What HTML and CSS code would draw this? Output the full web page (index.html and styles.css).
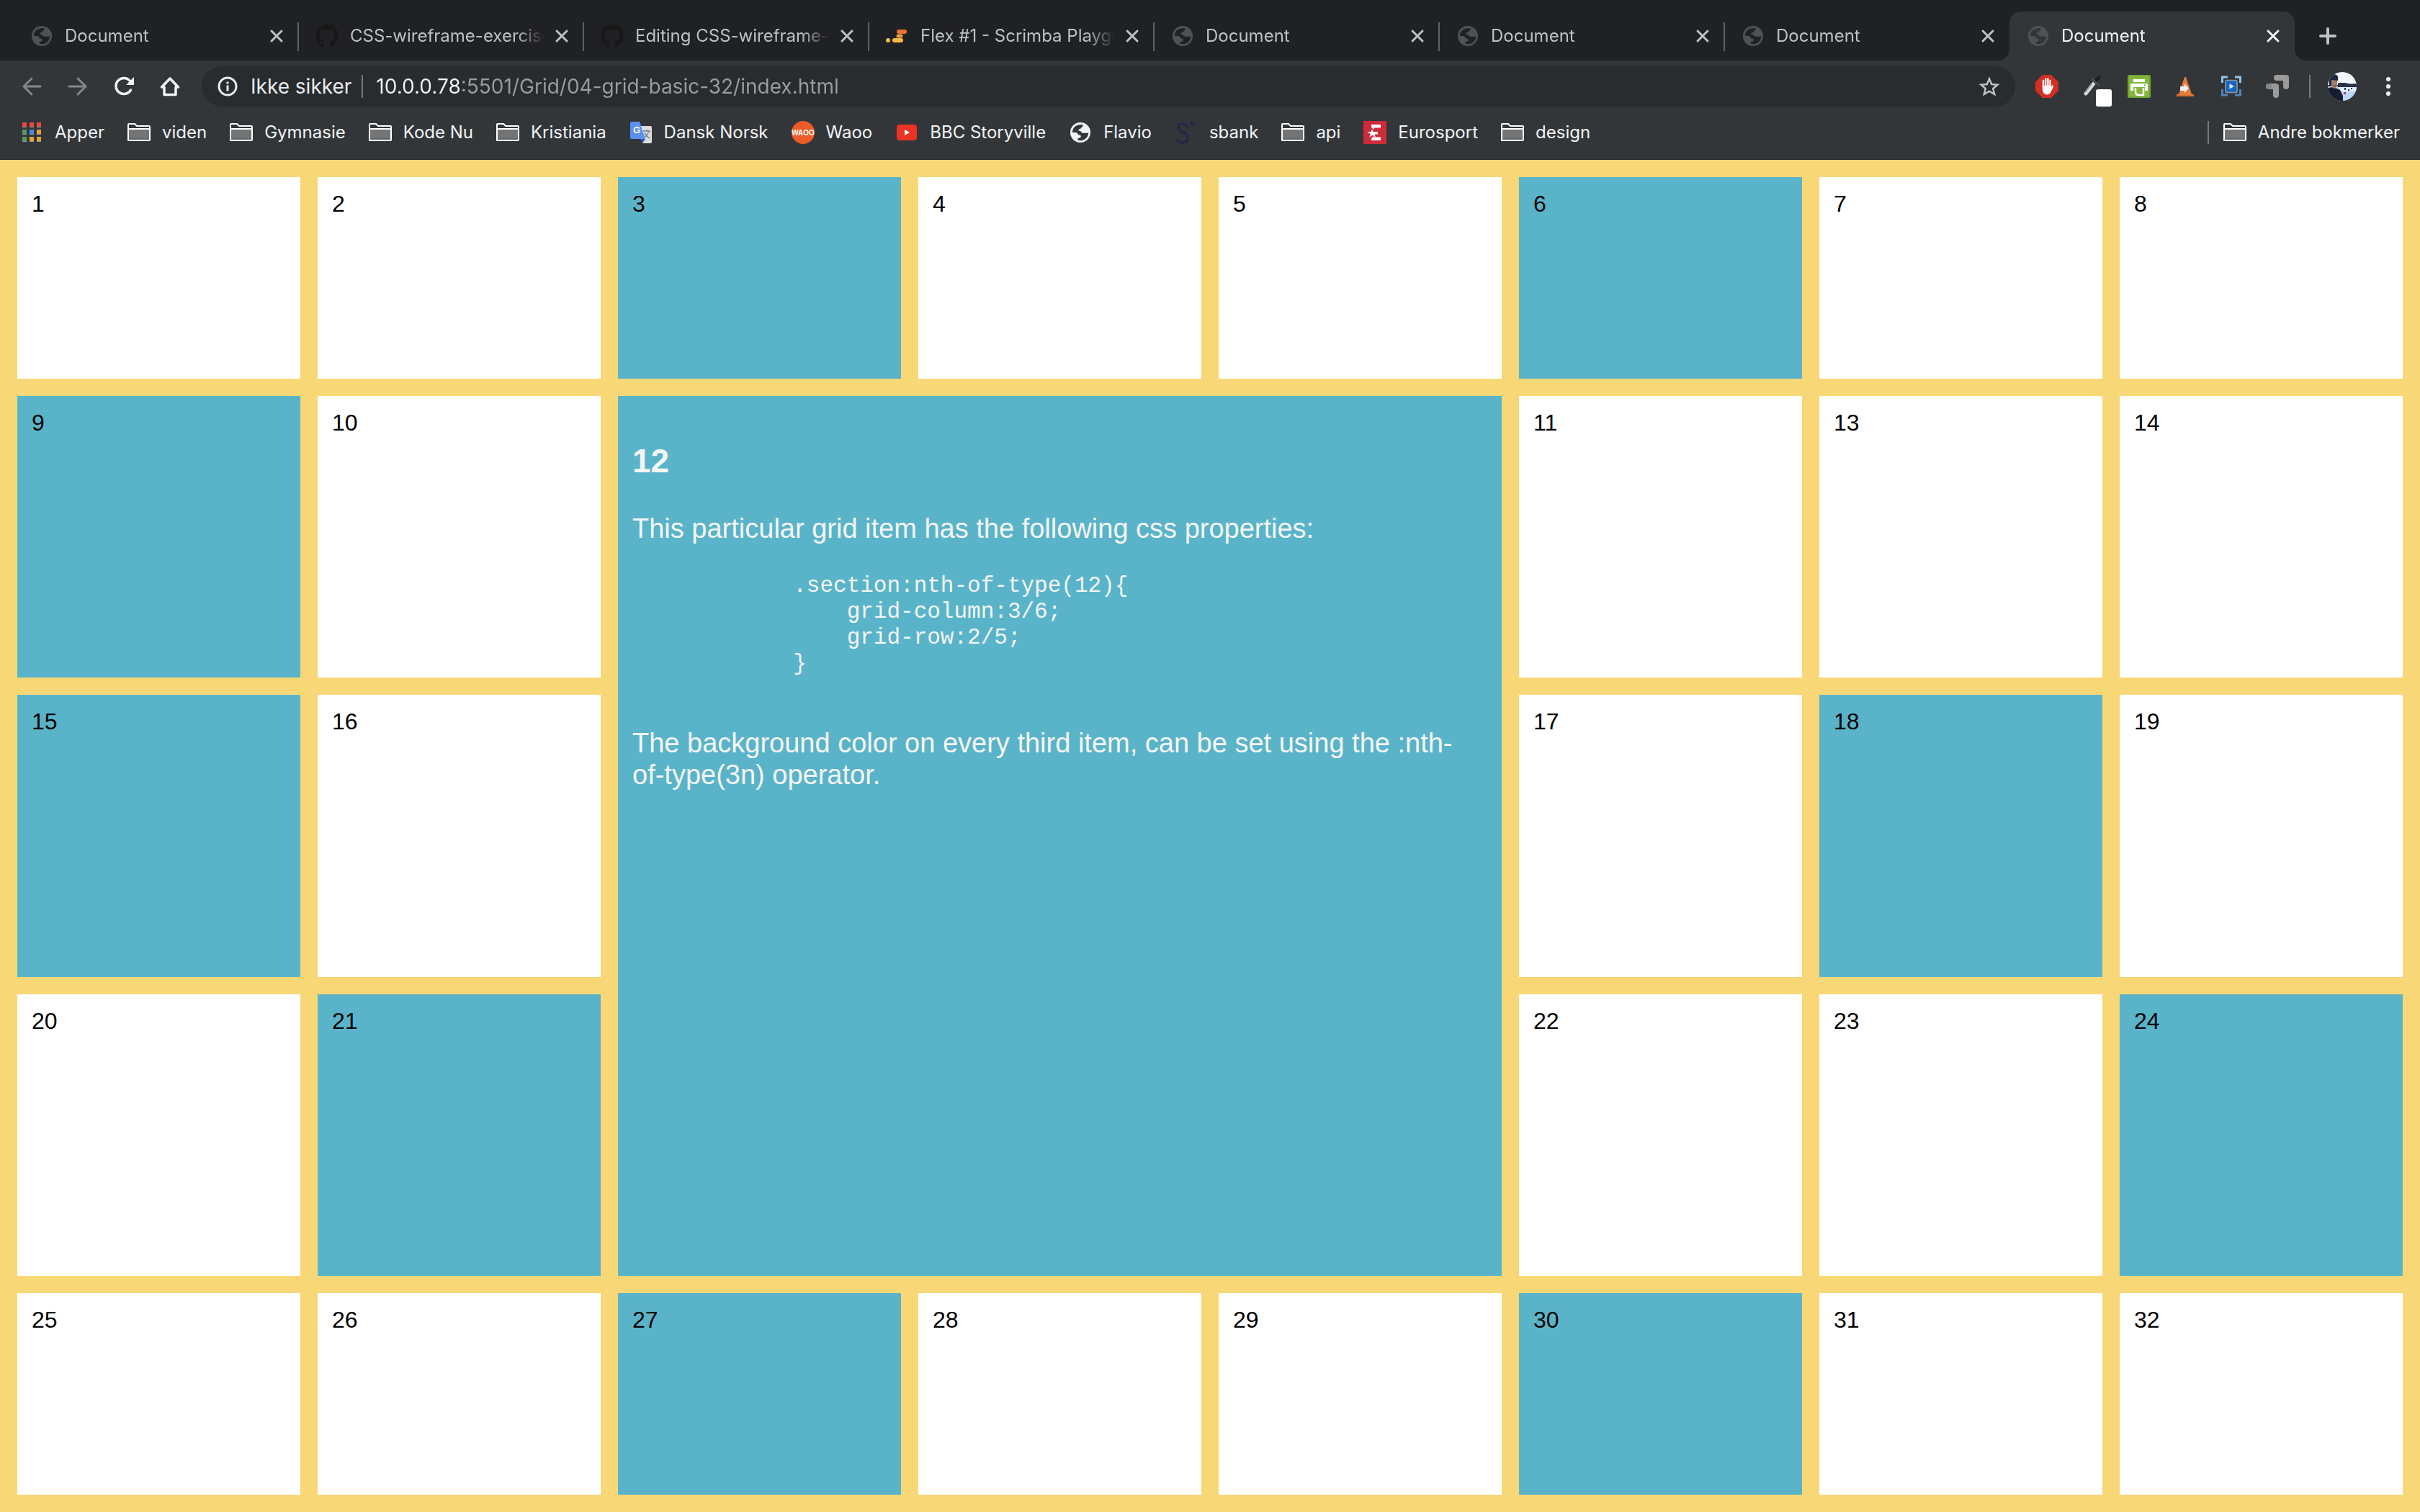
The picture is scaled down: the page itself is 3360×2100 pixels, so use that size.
FILE: index.html
```html
<!DOCTYPE html>
<html lang="no">
<head>
<meta charset="utf-8">
<meta name="viewport" content="width=device-width, initial-scale=1">
<title>Document</title>
<link rel="stylesheet" href="styles.css">
</head>
<body>
<svg class="sprite" aria-hidden="true">
  <symbol id="globe" viewBox="0 0 32 32">
    <path fill="currentColor" fill-rule="evenodd" d="M16 2a14 14 0 1 0 0 28a14 14 0 0 0 0-28zM5 16C5 10 9 6 15 5.300L19 5.300C20 6 20 7 19 8C17 9 17.500 10 16 10.800C14 11.200 13 12 13.500 13.500C16 13.500 17 14.500 17.500 16C20 17 23 17 27.200 16.500C27 22 23 27 16 27.200L12.500 26.500L12.500 24C14 24 16 24 16.500 22.500C17 21.500 17 20 15 19.500C12.500 19.500 12.500 18 11.500 16.500C10 15.800 7 16.200 5 16z"/>
  </symbol>
  <symbol id="github" viewBox="0 0 16 16">
    <path fill="#191717" d="M8 0C3.580 0 0 3.580 0 8c0 3.540 2.290 6.530 5.470 7.590.4.070.55-.17.55-.38 0-.19-.01-.82-.01-1.490-2.010.37-2.530-.49-2.690-.94-.09-.23-.48-.94-.82-1.130-.28-.15-.68-.52-.01-.53.63-.01 1.080.58 1.230.82.72 1.210 1.870.87 2.330.66.070-.52.28-.87.51-1.070-1.780-.2-3.640-.89-3.640-3.950 0-.87.31-1.590.82-2.150-.08-.2-.36-1.020.08-2.120 0 0 .67-.21 2.200.82.64-.18 1.320-.27 2-.27s1.360.09 2 .27c1.530-1.040 2.200-.82 2.200-.82.44 1.100.16 1.920.08 2.120.51.56.82 1.270.82 2.150 0 3.070-1.870 3.750-3.650 3.950.29.25.54.73.54 1.480 0 1.070-.01 1.930-.01 2.200 0 .21.15.46.55.38A8.010 8.010 0 0 0 16 8c0-4.420-3.580-8-8-8z"/>
  </symbol>
  <symbol id="scrimba" viewBox="0 0 32 32">
    <g stroke-linecap="round" fill="none">
      <path stroke="#f07030" stroke-width="6" d="M18 10H26"/>
      <path stroke="#f39a35" stroke-width="5" d="M17 16H21"/>
      <path stroke="#f6bc41" stroke-width="6" d="M12 22H21M3 22H3"/>
    </g>
  </symbol>
  <symbol id="close" viewBox="0 0 32 32">
    <path stroke="currentColor" stroke-width="3" stroke-linecap="round" d="M9 9L23 23M23 9L9 23"/>
  </symbol>
  <symbol id="folder" viewBox="0 0 32 32">
    <path fill="#323639" stroke="#fff" stroke-width="2" stroke-linejoin="round" d="M1 27V5Q1 4 2 4H10L13 7H30Q31 7 31 8V26Q31 27 30 27H2Q1 27 1 26z"/>
    <path fill="#737476" d="M2 12H30V26H2z"/>
    <path fill="#636466" d="M2 24H30V26H2z"/>
    <path stroke="#fff" stroke-width="2" d="M1 11H31"/>
  </symbol>
</svg>

<header class="browser">
  <nav class="tabs" aria-label="Faner">
    <div class="tab"><button class="tab-main"><svg class="icon"><use href="#globe"/></svg><span class="tab-title">Document</span></button><button class="tab-close" aria-label="Lukk"><svg class="icon"><use href="#close"/></svg></button></div>
    <div class="tab"><button class="tab-main"><svg class="icon"><use href="#github"/></svg><span class="tab-title">CSS-wireframe-exercises</span></button><button class="tab-close" aria-label="Lukk"><svg class="icon"><use href="#close"/></svg></button></div>
    <div class="tab"><button class="tab-main"><svg class="icon"><use href="#github"/></svg><span class="tab-title">Editing CSS-wireframe-exercises</span></button><button class="tab-close" aria-label="Lukk"><svg class="icon"><use href="#close"/></svg></button></div>
    <div class="tab"><button class="tab-main"><svg class="icon"><use href="#scrimba"/></svg><span class="tab-title">Flex #1 - Scrimba Playground</span></button><button class="tab-close" aria-label="Lukk"><svg class="icon"><use href="#close"/></svg></button></div>
    <div class="tab"><button class="tab-main"><svg class="icon"><use href="#globe"/></svg><span class="tab-title">Document</span></button><button class="tab-close" aria-label="Lukk"><svg class="icon"><use href="#close"/></svg></button></div>
    <div class="tab"><button class="tab-main"><svg class="icon"><use href="#globe"/></svg><span class="tab-title">Document</span></button><button class="tab-close" aria-label="Lukk"><svg class="icon"><use href="#close"/></svg></button></div>
    <div class="tab tab-last"><button class="tab-main"><svg class="icon"><use href="#globe"/></svg><span class="tab-title">Document</span></button><button class="tab-close" aria-label="Lukk"><svg class="icon"><use href="#close"/></svg></button></div>
    <div class="tab tab-active"><button class="tab-main"><svg class="icon"><use href="#globe"/></svg><span class="tab-title">Document</span></button><button class="tab-close" aria-label="Lukk"><svg class="icon"><use href="#close"/></svg></button></div>
    <button class="new-tab" aria-label="Ny fane"><svg class="icon" viewBox="0 0 32 32"><path stroke="#bdc1c6" stroke-width="4" stroke-linecap="round" d="M16 6V26M6 16H26"/></svg></button>
  </nav>

  <div class="toolbar">
    <button class="tool" aria-label="Tilbake"><svg class="icon" viewBox="0 0 32 32" fill="none" stroke="#85888a" stroke-width="3" stroke-linecap="round" stroke-linejoin="round"><path d="M28 16H5M16 5L5 16L16 27"/></svg></button>
    <button class="tool" aria-label="Fremover"><svg class="icon" viewBox="0 0 32 32" fill="none" stroke="#85888a" stroke-width="3" stroke-linecap="round" stroke-linejoin="round"><path d="M4 16H27M16 5L27 16L16 27"/></svg></button>
    <button class="tool" aria-label="Last inn på nytt"><svg class="icon" viewBox="0 0 32 32"><path fill="none" stroke="#f1f3f4" stroke-width="3.500" stroke-linecap="round" d="M25.500 21A11 11 0 1 1 24.500 8.500"/><path fill="#f1f3f4" d="M30 3V14H19z"/></svg></button>
    <button class="tool" aria-label="Startside"><svg class="icon" viewBox="0 0 32 32"><path fill="none" stroke="#f1f3f4" stroke-width="3.500" stroke-linejoin="round" stroke-linecap="round" d="M4.500 17L16 5L27.500 17H24V27.500H8V17z"/></svg></button>
    <div class="omnibox">
      <button class="site-info"><svg class="icon" viewBox="0 0 32 32"><circle cx="16" cy="16" r="12" fill="none" stroke="#e8eaed" stroke-width="3"/><path fill="#e8eaed" d="M14.500 9.500H17.500V12.500H14.500zM14.500 14.500H17.500V22.500H14.500z"/></svg><span>Ikke sikker</span></button>
      <span class="rule"></span>
      <input class="url" type="text" aria-label="Adresse" value="10.0.0.78:5501/Grid/04-grid-basic-32/index.html">
      <button class="star" aria-label="Bokmerk"><svg class="icon" viewBox="0 0 32 32"><path fill="none" stroke="#bdc1c6" stroke-width="2.500" d="M16 5.500L19.200 13L27.500 13.700L21.200 19L23.200 27L16 22.700L8.800 27L10.800 19L4.500 13.700L12.800 13z"/></svg></button>
    </div>
    <button class="tool" aria-label="AdBlock"><svg class="icon" viewBox="0 0 32 32"><path fill="#d52e22" d="M10 0H22L32 10V22L22 32H10L0 22V10z"/><path fill="none" stroke="#fff" stroke-width="2.400" stroke-linecap="round" d="M11 8V17M14.200 5.500V17M17.400 5.500V17M20.500 8V19M24 15.500L21.500 21"/><path fill="#fff" d="M9.800 15H21.700L23 18.500Q22 27.500 16 27.500Q9.800 27 9.800 20z"/></svg></button>
    <button class="tool" aria-label="ColorZilla"><svg class="icon icon-spill" viewBox="0 0 32 32"><path stroke="#d9d9d9" stroke-width="5" stroke-linecap="round" d="M6 26L17 12"/><path stroke="#8b8b8b" stroke-width="2" d="M5 24L14 12"/><path stroke="#202020" stroke-width="5" stroke-linecap="round" d="M19 9L24 4"/><path stroke="#4c4c4c" stroke-width="3" stroke-linecap="round" d="M15 6L24 14"/><rect x="20" y="20" width="22" height="24" rx="3" fill="#fff"/></svg></button>
    <button class="tool" aria-label="Skriv ut"><svg class="icon" viewBox="0 0 32 32"><rect width="32" height="32" rx="2" fill="#72a334"/><rect x="2" y="2" width="28" height="28" rx="2" fill="#83b73c"/><path fill="#fff" d="M8 6H24V10H8zM6 12H26Q28 12 28 14V22H24V17H8V22H4V14Q4 12 6 12z"/><path fill="none" stroke="#fff" stroke-width="2.500" d="M11 18V25Q12 28 16 28H22V18"/><circle cx="24" cy="14" r="1" fill="#72a334"/></svg></button>
    <button class="tool" aria-label="VLC"><svg class="icon" viewBox="0 0 32 32"><path fill="#e37c38" d="M15 3H17L25 27H28V30H4V27H7z"/><path fill="#c96427" d="M4 28.500H28V30H4z"/><path fill="#eee" d="M9 16H15V12L21 18.500L15 25V22H9z"/></svg></button>
    <button class="tool" aria-label="Skjermopptak"><svg class="icon" viewBox="0 0 32 32" fill="none"><path stroke="#90c4f0" stroke-width="3" d="M3.500 11V3H11M21 3H28.500V11"/><path stroke="#4c86bb" stroke-width="3" d="M3.500 20V28H11M21 28H28.500V20"/><rect x="8" y="7.500" width="16" height="17" rx="2" fill="#1767bd" stroke="#8e9cab" stroke-width="1.500"/><path fill="#d8e5f2" d="M13.500 12L20 16L13.500 19.500z"/></svg></button>
    <button class="tool" aria-label="Utvidelse"><svg class="icon" viewBox="0 0 32 32"><path fill="none" stroke="#9a9a9a" stroke-width="8" stroke-linecap="round" stroke-linejoin="round" d="M15 4H28V16"/><path fill="none" stroke="#323639" stroke-width="10" stroke-linejoin="round" d="M4 16H16V28"/><path fill="none" stroke="#9a9a9a" stroke-width="8" stroke-linecap="round" stroke-linejoin="round" d="M4 16H14V28"/><circle cx="4" cy="16" r="4" fill="#838383"/></svg></button>
    <span class="rule rule-tools"></span>
    <button class="tool" aria-label="Profil"><svg class="avatar" viewBox="0 0 40 40"><defs><clipPath id="round"><circle cx="20" cy="20" r="20"/></clipPath></defs><g clip-path="url(#round)"><path fill="#f4f7fd" d="M0 0H40V18H0z"/><path fill="#b9d8f6" d="M0 20H40V40H0z"/><path fill="#dfeefc" d="M16 21H40V27H16z"/><path fill="#27334a" d="M14 15L24 15L31 16.500L40 16V21H14z"/><path fill="#1d3556" d="M23 22H25V25H23zM32 22H34V24H32zM28 24H30V26H28z"/><path fill="#b8405a" d="M22 28H25V31H22z"/><path fill="#171d31" d="M0 22L8 21L17 25L21 33V40H0z"/><path fill="#a67c70" d="M4 10H13V18Q12 23 8.500 23Q4 21 4 16z"/><path fill="#1c2740" d="M2 12Q1 3 9 3Q16 4 14 12L5 11V18L2 20z"/><path stroke="#5b3b3a" stroke-width="1" d="M7 19H12"/></g></svg></button>
    <button class="tool" aria-label="Meny"><svg class="icon" viewBox="0 0 32 32" fill="#f1f3f4"><circle cx="16" cy="6" r="3"/><circle cx="16" cy="16" r="3"/><circle cx="16" cy="26" r="3"/></svg></button>
  </div>

  <nav class="bookmarks" aria-label="Bokmerker">
    <a class="bookmark" href="#"><svg class="icon" viewBox="0 0 32 32"><path fill="#9a9a9a" d="M3 8h6v1h-6zM13 8h6v1h-6zM23 8h6v1h-6zM3 18h6v1h-6zM13 18h6v1h-6zM23 18h6v1h-6zM3 28h6v1h-6zM13 28h6v1h-6zM23 28h6v1h-6z"/><path fill="#e54b3c" d="M3 2h6v6h-6zM13 2h6v6h-6zM23 2h6v6h-6z"/><path fill="#539b5c" d="M3 12h6v6h-6zM3 22h6v6h-6z"/><path fill="#4688f1" d="M13 12h6v6h-6z"/><path fill="#e5a238" d="M23 12h6v6h-6zM13 22h6v6h-6zM23 22h6v6h-6z"/></svg>Apper</a>
    <button class="bookmark"><svg class="icon"><use href="#folder"/></svg>viden</button>
    <button class="bookmark"><svg class="icon"><use href="#folder"/></svg>Gymnasie</button>
    <button class="bookmark"><svg class="icon"><use href="#folder"/></svg>Kode Nu</button>
    <button class="bookmark"><svg class="icon"><use href="#folder"/></svg>Kristiania</button>
    <a class="bookmark" href="#"><svg class="icon" viewBox="0 0 32 32"><path fill="#dcdcdc" d="M14 7H29Q31 7 31 9V29Q31 31 29 31H18z"/><path fill="none" stroke="#6b8796" stroke-width="1.500" d="M19 14H29M24 12V14M27 14Q25 20 19 24M21 17Q24 22 28 24"/><path fill="#3a52c4" d="M15 25H22L18 31z"/><path fill="#5b90f0" d="M3 1H14L22 25H3Q1 25 1 23V3Q1 1 3 1z"/><text class="mark-g" x="5" y="17">G</text></svg>Dansk Norsk</a>
    <a class="bookmark" href="#"><svg class="icon" viewBox="0 0 32 32"><circle cx="16" cy="16" r="16" fill="#ec5b29"/><text class="mark-waoo" x="16" y="20" text-anchor="middle">WAOO</text></svg>Waoo</a>
    <a class="bookmark" href="#"><svg class="icon" viewBox="0 0 32 32"><rect x="2" y="5" width="28" height="22" rx="4" fill="#eb3223"/><path fill="#fff" d="M13 12L20 16L13 20z"/></svg>BBC Storyville</a>
    <a class="bookmark" href="#"><svg class="icon"><use href="#globe"/></svg>Flavio</a>
    <a class="bookmark" href="#"><svg class="icon" viewBox="0 0 32 32"><path fill="none" stroke="#262547" stroke-width="3.500" d="M18 9Q16 4 11 4Q5 4 5 9Q5 13 10 15Q18 17 18 23Q18 30 10 30Q4 30 3 25"/><circle cx="23.500" cy="3" r="3" fill="#262547"/></svg>sbank</a>
    <button class="bookmark"><svg class="icon"><use href="#folder"/></svg>api</button>
    <a class="bookmark" href="#"><svg class="icon" viewBox="0 0 32 32"><path fill="#cd2b3a" d="M0 0H32V32H0z"/><path fill="#fff" d="M11 5H24V9.500H15V12L11 9zM24 22.500V27H11V24L15 21V22.500zM12 11L13.500 15H20V18.500H15.500L17 22.500L12.500 19.500L8 23L9.800 18L5 15H10.500z"/></svg>Eurosport</a>
    <button class="bookmark"><svg class="icon"><use href="#folder"/></svg>design</button>
    <span class="rule rule-bookmarks"></span>
    <button class="bookmark"><svg class="icon"><use href="#folder"/></svg>Andre bokmerker</button>
  </nav>
</header>

<main class="grid">
  <section class="section">1</section>
  <section class="section">2</section>
  <section class="section">3</section>
  <section class="section">4</section>
  <section class="section">5</section>
  <section class="section">6</section>
  <section class="section">7</section>
  <section class="section">8</section>
  <section class="section">9</section>
  <section class="section">10</section>
  <section class="section">11</section>
  <section class="section">
    <h2>12</h2>
    <p>This particular grid item has the following css properties:</p>
    <pre>            .section:nth-of-type(12){
                grid-column:3/6;
                grid-row:2/5;
            }</pre>
    <p>The background color on every third item, can be set using the :nth-<span class="keep">of-type(3n)</span> operator.</p>
  </section>
  <section class="section">13</section>
  <section class="section">14</section>
  <section class="section">15</section>
  <section class="section">16</section>
  <section class="section">17</section>
  <section class="section">18</section>
  <section class="section">19</section>
  <section class="section">20</section>
  <section class="section">21</section>
  <section class="section">22</section>
  <section class="section">23</section>
  <section class="section">24</section>
  <section class="section">25</section>
  <section class="section">26</section>
  <section class="section">27</section>
  <section class="section">28</section>
  <section class="section">29</section>
  <section class="section">30</section>
  <section class="section">31</section>
  <section class="section">32</section>
</main>
</body>
</html>
```
FILE: styles.css
```css
* {
  box-sizing: border-box;
}

body {
  display: flex;
  flex-direction: column;
  min-height: 100vh;
  margin: 0;
  background: #f8d777;
  font: 32px/34px "Liberation Sans", Arial, sans-serif;
}

button,
input {
  margin: 0;
  padding: 0;
  border: 0;
  background: none;
  color: inherit;
  font: inherit;
}

a {
  color: inherit;
  text-decoration: none;
}

.sprite {
  display: none;
}

.icon {
  display: block;
  flex: none;
  width: 32px;
  height: 32px;
}

.icon-spill {
  overflow: visible;
}

.rule {
  flex: none;
  width: 2px;
  height: 32px;
  background: #77797b;
}

/* Browser frame */

.browser {
  background: #323639;
  border-bottom: 1px solid #27292b;
  color: #f1f3f4;
  font: 24px/32px Inter, sans-serif;
}

.tabs {
  display: flex;
  height: 84px;
  padding: 16px 0 0 18px;
  background: #202124;
  color: #bdc1c6;
}

.tab {
  position: relative;
  display: flex;
  flex: 0 1 396px;
  align-items: center;
  min-width: 0;
  padding: 0 14px 0 24px;
}

.tab::after {
  content: "";
  position: absolute;
  top: 15px;
  right: -1px;
  width: 2px;
  height: 40px;
  background: #5f6164;
}

.tab-last::after {
  display: none;
}

.tab-main {
  display: flex;
  flex: 1;
  gap: 16px;
  min-width: 0;
  text-align: left;
}

.tab-main .icon {
  color: #4e5256;
}

.tab-title {
  flex: 1;
  overflow: hidden;
  white-space: nowrap;
  -webkit-mask-image: linear-gradient(to left, transparent, #000 40px);
  mask-image: linear-gradient(to left, transparent, #000 40px);
}

.tab-close {
  margin-left: 8px;
}

.tab-active {
  border-radius: 16px 16px 0 0;
  background: #323639;
  color: #f1f3f4;
}

.tab-active::before,
.tab-active::after {
  content: "";
  position: absolute;
  top: auto;
  bottom: 0;
  width: 16px;
  height: 16px;
}

.tab-active::before {
  left: -16px;
  background: radial-gradient(circle at 0 0, #202124 16px, #323639 16px);
}

.tab-active::after {
  right: -16px;
  background: radial-gradient(circle at 100% 0, #202124 16px, #323639 16px);
}

.new-tab {
  margin-left: 30px;
}

.toolbar {
  display: flex;
  align-items: center;
  padding: 8px 12px 0;
}

.tool {
  display: grid;
  flex: none;
  place-items: center;
  width: 64px;
  height: 56px;
}

.avatar {
  display: block;
  width: 40px;
  height: 40px;
}

.omnibox {
  display: flex;
  flex: 1;
  align-items: center;
  min-width: 0;
  height: 56px;
  margin: 0 12px;
  padding: 0 20px;
  border-radius: 28px;
  background: #282c2f;
  color: #e8eaed;
  font-size: 28px;
}

.site-info {
  display: flex;
  flex: none;
  gap: 16px;
  margin-right: 14px;
}

.url {
  flex: 1;
  min-width: 0;
  height: 40px;
  margin: 0 16px 0 18px;
  color: #9aa0a6;
  background: linear-gradient(to right, #f1f3f4 118px, #9a9da0 118px);
  -webkit-background-clip: text;
  background-clip: text;
  -webkit-text-fill-color: transparent;
}

.rule-tools {
  margin: 0 12px;
}

.bookmarks {
  display: flex;
  gap: 32px;
  align-items: center;
  height: 73px;
  padding: 0 28px 1px;
}

.bookmark {
  display: flex;
  flex: none;
  gap: 16px;
  align-items: center;
  white-space: nowrap;
}

.rule-bookmarks {
  margin: 0 -12px 0 auto;
}

.mark-g {
  fill: #fff;
  font: bold 13px "Liberation Sans", Arial, sans-serif;
}

.mark-waoo {
  fill: #fff;
  font: bold 10px "Liberation Sans", Arial, sans-serif;
}

/* Page */

.grid {
  display: grid;
  flex: 1;
  grid-template-columns: repeat(8, minmax(0, 1fr));
  grid-template-rows: 280px repeat(3, 1fr) 280px;
  gap: 24px;
  padding: 24px;
}

.section {
  padding: 20px;
  background: #fff;
  color: #000;
}

.section:nth-of-type(3n) {
  background: #5ab4c9;
}

.section:nth-of-type(12) {
  grid-column: 3 / 6;
  grid-row: 2 / 5;
  color: #f5f5f5;
}

.section h2 {
  margin: 42px 0 44px;
  font-size: 46px;
  line-height: 56px;
}

.section p {
  margin: 0;
  font-size: 38px;
  line-height: 44px;
}

.section pre {
  margin: 40px 0 70px;
  font: 31px/36px "Liberation Mono", "Courier New", monospace;
}

.keep {
  white-space: nowrap;
}
```
